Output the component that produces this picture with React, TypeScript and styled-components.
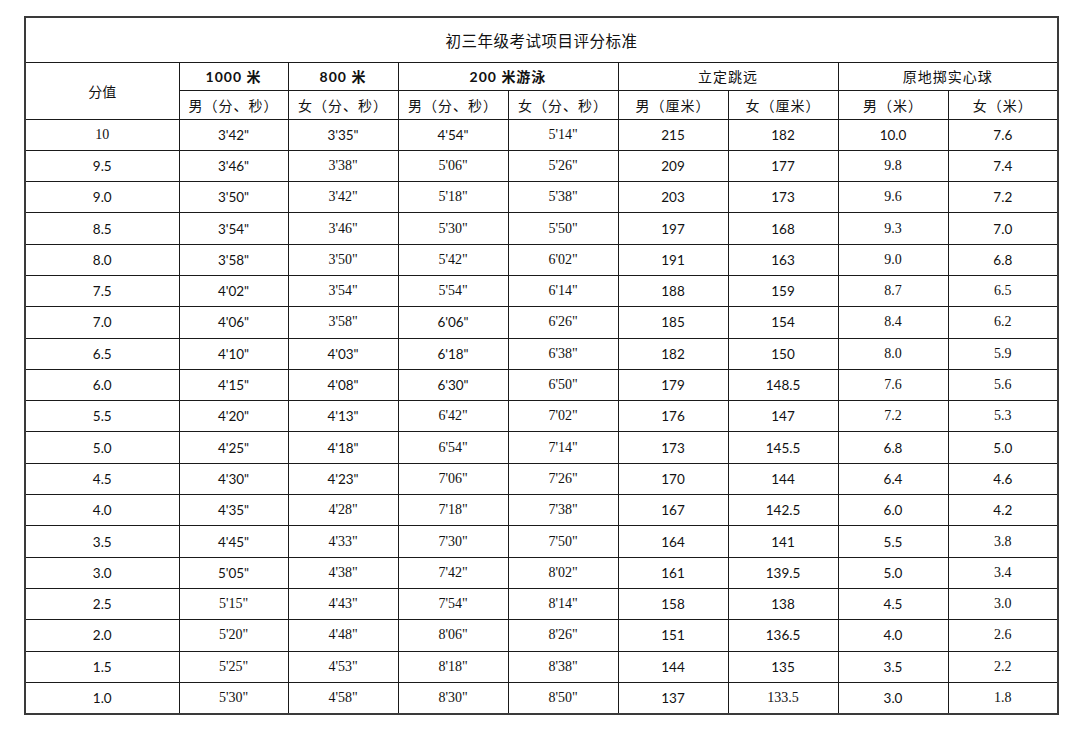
import React from "react";
import styled, { createGlobalStyle } from "styled-components";

// "~" in front of a value marks a cell typed in the serif face (as in the scanned sheet)
const rows: string[][] = [
  ["~10", "3'42\"", "3'35\"", "4'54\"", "~5'14\"", "215", "182", "10.0", "7.6"],
  ["9.5", "3'46\"", "~3'38\"", "~5'06\"", "~5'26\"", "209", "177", "~9.8", "7.4"],
  ["9.0", "3'50\"", "~3'42\"", "~5'18\"", "~5'38\"", "203", "173", "~9.6", "7.2"],
  ["8.5", "3'54\"", "~3'46\"", "~5'30\"", "~5'50\"", "197", "168", "~9.3", "7.0"],
  ["8.0", "3'58\"", "~3'50\"", "~5'42\"", "~6'02\"", "191", "163", "~9.0", "6.8"],
  ["7.5", "4'02\"", "~3'54\"", "~5'54\"", "~6'14\"", "188", "159", "~8.7", "~6.5"],
  ["7.0", "4'06\"", "~3'58\"", "6'06\"", "~6'26\"", "185", "154", "~8.4", "~6.2"],
  ["6.5", "4'10\"", "4'03\"", "6'18\"", "~6'38\"", "182", "150", "~8.0", "~5.9"],
  ["6.0", "4'15\"", "4'08\"", "6'30\"", "~6'50\"", "179", "148.5", "~7.6", "~5.6"],
  ["5.5", "4'20\"", "4'13\"", "~6'42\"", "~7'02\"", "176", "147", "~7.2", "~5.3"],
  ["5.0", "4'25\"", "4'18\"", "~6'54\"", "~7'14\"", "173", "145.5", "6.8", "5.0"],
  ["4.5", "4'30\"", "4'23\"", "~7'06\"", "~7'26\"", "170", "144", "6.4", "4.6"],
  ["4.0", "4'35\"", "~4'28\"", "~7'18\"", "~7'38\"", "167", "142.5", "6.0", "4.2"],
  ["3.5", "4'45\"", "~4'33\"", "~7'30\"", "~7'50\"", "164", "141", "5.5", "~3.8"],
  ["3.0", "5'05\"", "~4'38\"", "~7'42\"", "~8'02\"", "161", "139.5", "5.0", "~3.4"],
  ["2.5", "~5'15\"", "~4'43\"", "~7'54\"", "~8'14\"", "158", "138", "4.5", "~3.0"],
  ["2.0", "~5'20\"", "~4'48\"", "~8'06\"", "~8'26\"", "151", "136.5", "4.0", "~2.6"],
  ["1.5", "~5'25\"", "~4'53\"", "~8'18\"", "~8'38\"", "144", "135", "3.5", "~2.2"],
  ["1.0", "~5'30\"", "~4'58\"", "~8'30\"", "~8'50\"", "137", "~133.5", "3.0", "~1.8"],
];

const colWidths = [154, 109, 110, 110, 110, 110, 110, 110, 110];

const subHeads = [
  "男（分、秒）",
  "女（分、秒）",
  "男（分、秒）",
  "女（分、秒）",
  "男（厘米）",
  "女（厘米）",
  "男（米）",
  "女（米）",
];

export default function App() {
  return (
    <>
      <GlobalStyle />
      <Page>
        <Sheet>
          <colgroup>
            {colWidths.map((w, i) => (
              <col key={i} style={{ width: w }} />
            ))}
          </colgroup>
          <tbody>
            <tr>
              <TitleCell colSpan={9}>初三年级考试项目评分标准</TitleCell>
            </tr>
            <tr>
              <HeadCell rowSpan={2}>分值</HeadCell>
              <GroupCell $bold>
                1000 <Cjk>米</Cjk>
              </GroupCell>
              <GroupCell $bold>
                800 <Cjk>米</Cjk>
              </GroupCell>
              <GroupCell $bold colSpan={2}>
                200 <Cjk>米游泳</Cjk>
              </GroupCell>
              <GroupCell colSpan={2}>立定跳远</GroupCell>
              <GroupCell colSpan={2}>原地掷实心球</GroupCell>
            </tr>
            <tr>
              {subHeads.map((h, i) => (
                <SubCell key={i}>{h}</SubCell>
              ))}
            </tr>
            {rows.map((r, i) => (
              <tr key={i}>
                {r.map((v, j) => (
                  <DataCell key={j} $serif={v.startsWith("~")}>
                    {v.replace("~", "")}
                  </DataCell>
                ))}
              </tr>
            ))}
          </tbody>
        </Sheet>
      </Page>
    </>
  );
}

const GlobalStyle = createGlobalStyle`
  html, body {
    margin: 0;
    padding: 0;
    background: #ffffff;
  }
  * {
    box-sizing: border-box;
  }
`;

const Page = styled.div`
  width: 1080px;
  height: 730px;
  padding: 16px 0 0 24px;
  background: #fff;
`;

const Sheet = styled.table`
  width: 1033px;
  table-layout: fixed;
  border-collapse: collapse;
  border: 2px solid #3a3a3a;
  color: #111;
`;

const Cell = styled.td`
  border: 1.5px solid #1a1a1a;
  text-align: center;
  vertical-align: middle;
  padding: 0;
  white-space: nowrap;
`;

const TitleCell = styled(Cell)`
  height: 45px;
  font-family: "Noto Sans CJK SC", sans-serif;
  font-size: 15.5px;
  letter-spacing: 0.5px;
  padding-top: 1px;
`;

const HeadCell = styled(Cell)`
  font-family: "Noto Sans CJK SC", sans-serif;
  font-size: 14px;
`;

const GroupCell = styled(Cell)<{ $bold?: boolean }>`
  height: 28px;
  font-family: Lato, "Noto Sans CJK SC", sans-serif;
  font-size: 14px;
  font-weight: ${(p) => (p.$bold ? 700 : 400)};
  letter-spacing: 1px;
`;

const Cjk = styled.span`
  font-family: "Noto Sans CJK SC", sans-serif;
`;

const SubCell = styled(Cell)`
  height: 29px;
  font-family: "Noto Sans CJK SC", sans-serif;
  font-size: 14px;
  letter-spacing: 1px;
`;

const DataCell = styled(Cell)<{ $serif?: boolean }>`
  height: 31.3px;
  font-family: ${(p) =>
    p.$serif ? '"Liberation Serif", serif' : 'Lato, "Open Sans", sans-serif'};
  font-size: ${(p) => (p.$serif ? "14px" : "13.5px")};
`;
